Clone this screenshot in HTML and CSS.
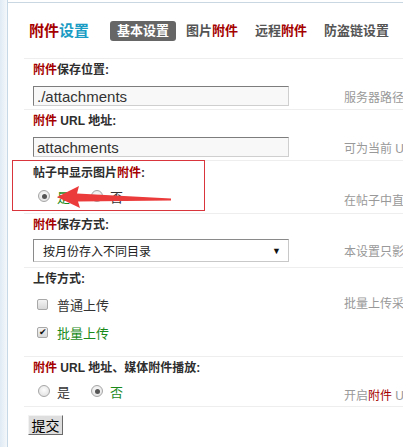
FILE: index.html
```html
<!DOCTYPE html>
<html lang="zh-CN">
<head>
<meta charset="utf-8">
<title>附件设置</title>
<link rel="stylesheet" href="styles.css">
</head>
<body>
<div class="page">
  <div class="side"></div>
  <div class="main">
    <div class="head">
      <h3 class="title"><span class="red">附件</span><span class="teal">设置</span></h3>
      <ul class="tabs">
        <li class="tab current">基本设置</li>
        <li class="tab">图片<span class="red">附件</span></li>
        <li class="tab">远程<span class="red">附件</span></li>
        <li class="tab">防盗链设置</li>
      </ul>
    </div>
    <div class="form">
      <div class="row r1">
        <div class="lbl"><span class="red">附件</span>保存位置:</div>
        <div class="field">
          <div class="ctrl"><input class="txt" type="text" value="./attachments"></div>
          <div class="tip tip-a">服务器路径，属性 777，必须为 web 可访问到的目录</div>
        </div>
      </div>
      <div class="row r2">
        <div class="lbl"><span class="red">附件</span> URL 地址:</div>
        <div class="field">
          <div class="ctrl"><input class="txt" type="text" value="attachments"></div>
          <div class="tip tip-a">可为当前 URL 下的相对地址或 http:// 开头的绝对地址</div>
        </div>
      </div>
      <div class="row r3">
        <div class="lbl lbl-low">帖子中显示图片<span class="red">附件</span>:</div>
        <div class="field">
          <div class="ctrl choices">
            <span class="radio on"></span><span class="opt green">是</span>
            <span class="radio"></span><span class="opt">否</span>
          </div>
          <div class="tip tip-c">在帖子中直接将图片或动画附件显示出来，而不需要点击附件链接</div>
        </div>
      </div>
      <div class="row r4">
        <div class="lbl"><span class="red">附件</span>保存方式:</div>
        <div class="field">
          <div class="ctrl"><div class="select"><span>按月份存入不同目录</span><span class="caret">▼</span></div></div>
          <div class="tip tip-s">本设置只影响新上传的附件，设置更改之前的附件仍存放在原来位置</div>
        </div>
      </div>
      <div class="row r5">
        <div class="lbl">上传方式:</div>
        <div class="field">
          <div class="ctrl checks">
            <div class="check-line"><span class="box"></span><span class="opt">普通上传</span></div>
            <div class="check-line"><span class="box on">✔</span><span class="opt green">批量上传</span></div>
          </div>
          <div class="tip tip-e">批量上传采用 Flash 方式，可以一次选择多个文件</div>
        </div>
      </div>
      <div class="row r6">
        <div class="lbl"><span class="red">附件</span> URL 地址、媒体附件播放:</div>
        <div class="field">
          <div class="ctrl choices">
            <span class="radio"></span><span class="opt">是</span>
            <span class="radio on"></span><span class="opt green">否</span>
          </div>
          <div class="tip tip-c">开启<span class="red">附件</span> URL 地址后，媒体附件可直接播放</div>
        </div>
      </div>
      <div class="actions"><button class="btn" type="button">提交</button></div>
    </div>
  </div>
  <div class="callout"></div>
  <svg class="arrow" width="403" height="447" viewBox="0 0 403 447">
    <polygon points="57,197 79,186 77,193.5 171,198.5 171,200.5 78,201.5 80,208" fill="#ec3b3b"/>
  </svg>
</div>
</body>
</html>
```

FILE: styles.css
```css
html, body {
  margin: 0;
  padding: 0;
  background: #fff;
}
body {
  width: 403px;
  height: 447px;
  overflow: hidden;
  font-family: "Liberation Sans", "Noto Sans CJK SC", sans-serif;
  font-size: 12px;
  color: #333;
}
.page {
  position: relative;
  display: flex;
  width: 403px;
  height: 447px;
}
.side {
  width: 7px;
  flex: none;
  background: linear-gradient(to right, #dfeaf4, #f4f8fb);
  border-right: 1px solid #c6d8e6;
}
.main {
  flex: 1;
  min-width: 0;
  overflow: hidden;
  margin-top: 2px;
  border-top: 1px solid #c9d7e2;
}
.red { color: #a50000; }
.teal { color: #1a9cc4; }
.green { color: #1a8a1a; }

.head {
  display: flex;
  align-items: center;
  height: 55px;
  padding-left: 21px;
}
.title {
  margin: 0 21px 0 0;
  font-size: 15px;
  font-weight: bold;
  line-height: 20px;
  white-space: nowrap;
}
.tabs {
  display: flex;
  margin: 0;
  padding: 0;
  list-style: none;
}
.tab {
  height: 20px;
  line-height: 20px;
  padding: 0 7px;
  margin-right: 3px;
  font-size: 13px;
  font-weight: bold;
  color: #555;
  white-space: nowrap;
  border-radius: 3px;
}
.tab.current {
  background: #666;
  color: #fff;
}

.form {
  margin-left: 16px;
  border-top: 1px solid #eee;
}
.row {
  padding-left: 9px;
  border-bottom: 1px solid #eee;
}
.lbl {
  height: 22px;
  line-height: 22px;
  font-weight: bold;
  color: #2e2e2e;
  white-space: nowrap;
}
.lbl-low { padding-top: 1px; }
.field {
  display: flex;
  padding: 5px 0 3px;
}
.ctrl {
  width: 311px;
  flex: none;
}
.tip {
  color: #999;
  white-space: nowrap;
  line-height: 14px;
}
.tip-a { padding-top: 5px; }
.tip-s { padding-top: 6px; }
.tip-c { padding-top: 10px; }
.tip-e { padding-top: 7px; }

.txt {
  display: block;
  box-sizing: border-box;
  width: 256px;
  height: 20px;
  margin: 0;
  padding: 0 3px;
  border: 1px solid;
  border-color: #7d7d7d #cfcfcf #cfcfcf #7d7d7d;
  background: #f8f8f8;
  font-family: "Liberation Sans", sans-serif;
  font-size: 15px;
  color: #333;
  outline: none;
}
.select {
  box-sizing: border-box;
  width: 256px;
  height: 23px;
  display: flex;
  align-items: center;
  justify-content: space-between;
  padding: 0 7px 0 9px;
  border: 1px solid;
  border-color: #8a8a8a #c8c8c8 #c8c8c8 #8a8a8a;
  background: #fff;
  font-size: 12px;
  color: #222;
}
.caret {
  font-size: 9px;
  color: #111;
}

.r3 .field { padding: 0 0 5px; }
.r4 .field { padding: 3px 0 5px; }
.r5 .field { padding: 0 0 10px; }
.r6 .field { padding: 0 0 3px; }

.choices {
  display: flex;
  align-items: center;
  height: 24px;
}
.radio {
  box-sizing: border-box;
  width: 12px;
  height: 12px;
  margin-left: 5px;
  border: 1px solid #a6a6a6;
  border-radius: 50%;
  background: radial-gradient(circle at 50% 40%, #fdfdfd, #dcdcdc);
  flex: none;
  position: relative;
}
.radio.on::after {
  content: "";
  position: absolute;
  left: 2.5px;
  top: 2.5px;
  width: 5px;
  height: 5px;
  border-radius: 50%;
  background: #555;
}
.opt {
  margin-left: 7px;
  font-size: 13px;
  white-space: nowrap;
}
.choices .radio + .opt { margin-right: 16px; }
.choices .radio:nth-of-type(2) { margin-left: 0; }
.choices .radio:nth-of-type(2) + .opt { margin-left: 8px; }

.checks { display: flex; flex-direction: column; }
.check-line {
  display: flex;
  align-items: center;
  height: 28px;
}
.box {
  box-sizing: border-box;
  width: 11px;
  height: 11px;
  margin-left: 4px;
  border: 1px solid #a8a8a8;
  border-radius: 2px;
  background: linear-gradient(#f4f4f4, #d8d8d8);
  font-size: 9px;
  line-height: 9px;
  text-align: center;
  color: #111;
  flex: none;
}
.check-line .opt { margin-left: 9px; }

.actions {
  padding: 8px 0 0 4px;
}
.btn {
  box-sizing: border-box;
  width: 35px;
  height: 20px;
  padding: 0;
  margin: 0;
  border: 1px solid;
  border-color: #f2f2f2 #6a6a6a #6a6a6a #f2f2f2;
  background: #dedede;
  font-family: "Noto Sans CJK SC", sans-serif;
  font-size: 14px;
  line-height: 16px;
  color: #000;
}

.callout {
  position: absolute;
  left: 12px;
  top: 160px;
  width: 191px;
  height: 49px;
  border: 1px solid #d8363c;
  pointer-events: none;
}
.arrow {
  position: absolute;
  left: 0;
  top: 0;
  pointer-events: none;
}
```
